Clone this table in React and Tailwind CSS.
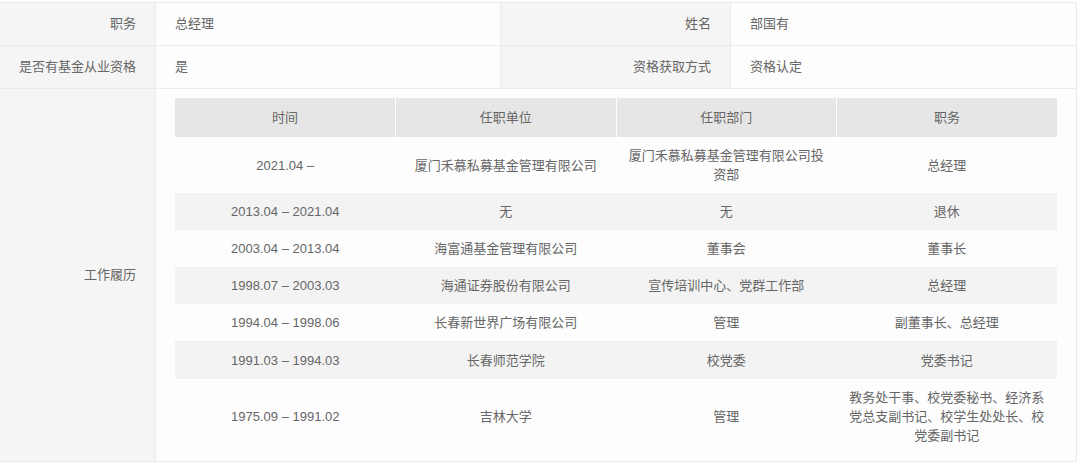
import React from "react";

const rows = [
  ["2021.04 –", "厦门禾慕私募基金管理有限公司", "厦门禾慕私募基金管理有限公司投资部", "总经理"],
  ["2013.04 – 2021.04", "无", "无", "退休"],
  ["2003.04 – 2013.04", "海富通基金管理有限公司", "董事会", "董事长"],
  ["1998.07 – 2003.03", "海通证券股份有限公司", "宣传培训中心、党群工作部", "总经理"],
  ["1994.04 – 1998.06", "长春新世界广场有限公司", "管理", "副董事长、总经理"],
  ["1991.03 – 1994.03", "长春师范学院", "校党委", "党委书记"],
  ["1975.09 – 1991.02", "吉林大学", "管理", "教务处干事、校党委秘书、经济系党总支副书记、校学生处处长、校党委副书记"],
];

const font = { fontFamily: '"Liberation Sans", "Noto Sans CJK SC", sans-serif' };

function Label({ children, className = "" }) {
  return (
    <div className={"flex items-center justify-end bg-[#f5f5f5] pr-[19px] border-r border-b border-[#ebebeb] " + className}>
      {children}
    </div>
  );
}

function Value({ children, className = "" }) {
  return (
    <div className={"flex items-center pl-[19px] bg-[#fdfdfd] border-r border-b border-[#ebebeb] " + className}>
      {children}
    </div>
  );
}

export default function App() {
  return (
    <div className="w-[1080px] h-[465px] bg-white pt-[2px] text-[13px] text-[#666]" style={font}>
      <div className="grid w-[1077px] grid-cols-[156px_345px_230px_346px] border-t border-[#ebebeb]">
        <Label className="h-[43px]">职务</Label>
        <Value className="h-[43px]">总经理</Value>
        <Label className="h-[43px]">姓名</Label>
        <Value className="h-[43px]">部国有</Value>

        <Label className="h-[43px]">是否有基金从业资格</Label>
        <Value className="h-[43px]">是</Value>
        <Label className="h-[43px]">资格获取方式</Label>
        <Value className="h-[43px]">资格认定</Value>

        <Label className="h-[373px]">工作履历</Label>
        <div className="col-span-3 bg-[#fdfdfd] border-r border-b border-[#ebebeb] pl-[19px] pr-[18px] pt-[9px]">
          <table className="w-[882px] table-fixed border-collapse text-center leading-[19px]">
            <thead>
              <tr className="bg-[#e6e6e6] h-[39px]">
                <th className="font-normal border-r border-white">时间</th>
                <th className="font-normal border-r border-white">任职单位</th>
                <th className="font-normal border-r border-white">任职部门</th>
                <th className="font-normal">职务</th>
              </tr>
            </thead>
            <tbody>
              {rows.map((r, i) => (
                <tr
                  key={i}
                  className={
                    (i % 2 === 1 ? "bg-[#f3f3f3] " : "") +
                    (i === 5 ? "border-t border-[#ebebeb]" : "")
                  }
                >
                  {r.map((c, j) => (
                    <td key={j} className="px-[10px] py-[9px] align-middle">
                      {c}
                    </td>
                  ))}
                </tr>
              ))}
            </tbody>
          </table>
        </div>
      </div>
    </div>
  );
}
